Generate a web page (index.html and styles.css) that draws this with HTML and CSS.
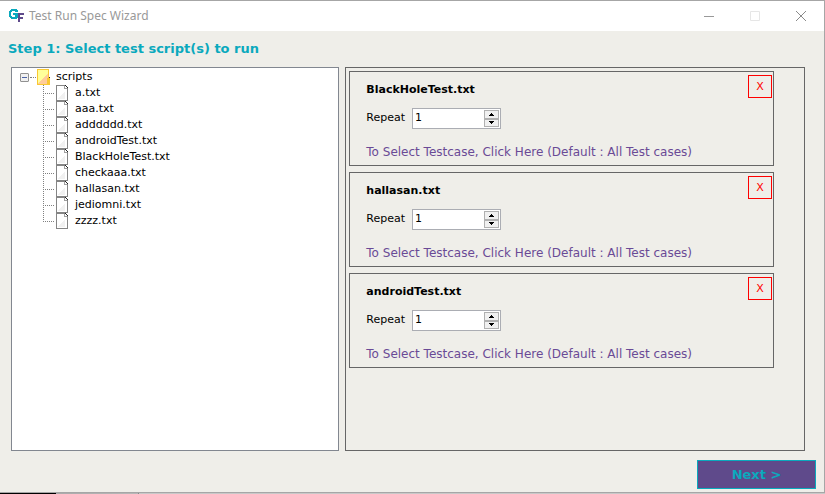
FILE: index.html
```html
<!DOCTYPE html>
<html lang="en">
<head>
<meta charset="utf-8">
<title>Test Run Spec Wizard</title>
<link rel="stylesheet" href="styles.css">
</head>
<body>
<svg class="defs" width="0" height="0" aria-hidden="true">
  <defs>
    <symbol id="file" viewBox="0 0 14 16" shape-rendering="crispEdges">
      <path d="M1 0H10L13 3V16H1Z" fill="#fff"/>
      <path d="M3 14L10 6V14Z" fill="#f1f1f1"/>
      <path d="M1 0H10V1H2V15H12V3H13V16H1Z" fill="#858585"/>
      <path d="M9 1H10V3H12V4H9Z" fill="#a0a0a0"/>
      <path d="M10 0H11V1H12V2H13V3H12V2H11V1H10Z" fill="#222"/>
    </symbol>
    <symbol id="up" viewBox="0 0 5 3" shape-rendering="crispEdges"><path d="M2 0H3V1H4V2H5V3H0V2H1V1H2Z"/></symbol>
    <symbol id="down" viewBox="0 0 5 3" shape-rendering="crispEdges"><path d="M0 0H5V1H4V2H3V3H2V2H1V1H0Z"/></symbol>
  </defs>
</svg>
<div class="window">
  <header class="titlebar">
    <svg class="logo" width="16" height="14" viewBox="0 0 16 14" shape-rendering="crispEdges" aria-hidden="true">
      <path d="M3 0H9V1H10V3H7V2H4V3H3V7H4V8H7V6H5V4H10V9H9V10H3V9H2V8H1V2H2V1H3Z" fill="#0aa9bd"/>
      <path d="M10 4H16V6H12V8H15V10H12V13H10Z" fill="#5f4a8b"/>
    </svg>
    <span class="caption">Test Run Spec Wizard</span>
    <button class="winbtn" aria-label="Minimize"><svg width="10" height="10" viewBox="0 0 10 10"><path d="M0 5.500H10" stroke="#999"/></svg></button>
    <button class="winbtn" aria-label="Maximize" disabled><svg width="10" height="10" viewBox="0 0 10 10"><path d="M.5 .5H9.500V9.500H.5Z" fill="none" stroke="#e6e6e6"/></svg></button>
    <button class="winbtn" aria-label="Close"><svg width="10" height="10" viewBox="0 0 10 10"><path d="M0 0L10 10M10 0L0 10" stroke="#8a8a8a"/></svg></button>
  </header>
  <h1>Step 1: Select test script(s) to run</h1>
  <main class="panes">
    <section class="tree" aria-label="Scripts">
      <div class="root">
        <button class="toggle" aria-label="Collapse scripts"></button>
        <span class="dots"></span>
        <svg width="14" height="16" viewBox="0 0 14 16" shape-rendering="crispEdges" aria-hidden="true">
          <path d="M1 1H12V15H1Z" fill="#ff9"/><path d="M12 3V15H1Z" fill="#ffcc99"/>
          <path d="M0 0H12V8H13V16H0ZM1 1V15H10V9H11V1Z" fill="#f9c832" fill-rule="evenodd"/>
          <path d="M12 8H13V9H12Z" fill="#222"/>
        </svg>
        <span class="name">scripts</span>
      </div>
      <ul>
        <li><svg width="14" height="16"><use href="#file"/></svg><span>a.txt</span></li>
        <li><svg width="14" height="16"><use href="#file"/></svg><span>aaa.txt</span></li>
        <li><svg width="14" height="16"><use href="#file"/></svg><span>adddddd.txt</span></li>
        <li><svg width="14" height="16"><use href="#file"/></svg><span>androidTest.txt</span></li>
        <li><svg width="14" height="16"><use href="#file"/></svg><span>BlackHoleTest.txt</span></li>
        <li><svg width="14" height="16"><use href="#file"/></svg><span>checkaaa.txt</span></li>
        <li><svg width="14" height="16"><use href="#file"/></svg><span>hallasan.txt</span></li>
        <li><svg width="14" height="16"><use href="#file"/></svg><span>jediomni.txt</span></li>
        <li><svg width="14" height="16"><use href="#file"/></svg><span>zzzz.txt</span></li>
      </ul>
    </section>
    <section class="selected" aria-label="Selected scripts">
      <article class="card">
        <div class="info">
          <h2>BlackHoleTest.txt</h2>
          <div class="repeat">
            <label for="r1">Repeat</label>
            <span class="spinner"><input id="r1" type="text" inputmode="numeric" value="1"><span class="steps"><button aria-label="Increase"><svg width="5" height="3"><use href="#up"/></svg></button><button aria-label="Decrease"><svg width="5" height="3"><use href="#down"/></svg></button></span></span>
          </div>
          <a href="#">To Select Testcase, Click Here (Default : All Test cases)</a>
        </div>
        <button class="remove">X</button>
      </article>
      <article class="card">
        <div class="info">
          <h2>hallasan.txt</h2>
          <div class="repeat">
            <label for="r2">Repeat</label>
            <span class="spinner"><input id="r2" type="text" inputmode="numeric" value="1"><span class="steps"><button aria-label="Increase"><svg width="5" height="3"><use href="#up"/></svg></button><button aria-label="Decrease"><svg width="5" height="3"><use href="#down"/></svg></button></span></span>
          </div>
          <a href="#">To Select Testcase, Click Here (Default : All Test cases)</a>
        </div>
        <button class="remove">X</button>
      </article>
      <article class="card">
        <div class="info">
          <h2>androidTest.txt</h2>
          <div class="repeat">
            <label for="r3">Repeat</label>
            <span class="spinner"><input id="r3" type="text" inputmode="numeric" value="1"><span class="steps"><button aria-label="Increase"><svg width="5" height="3"><use href="#up"/></svg></button><button aria-label="Decrease"><svg width="5" height="3"><use href="#down"/></svg></button></span></span>
          </div>
          <a href="#">To Select Testcase, Click Here (Default : All Test cases)</a>
        </div>
        <button class="remove">X</button>
      </article>
    </section>
  </main>
  <footer><button class="next">Next &gt;</button></footer>
</div>
<div class="desktop"></div>
</body>
</html>
```
FILE: styles.css
```css
* { box-sizing: border-box; }
body {
  margin: 0;
  min-height: 100vh;
  display: flex;
  flex-direction: column;
  font: 11px/16px "DejaVu Sans", Verdana, sans-serif;
  color: #000;
  background: #efeee9;
}
button, input { font: inherit; margin: 0; padding: 0; border-radius: 0; }
svg { display: block; flex: none; }
.defs { position: absolute; }

.window {
  flex: 1;
  display: flex;
  flex-direction: column;
  border: 1px solid #a6a6a6;
  border-left: 0;
}
.desktop {
  height: 1px;
  background: linear-gradient(to right, #000 56px, #aaa 56px, #b8b8b8 138px, #888 138px, #888 139px, #c8c8c8 139px);
}

.titlebar {
  display: flex;
  align-items: center;
  height: 30px;
  padding-left: 8px;
  background: #fff;
}
.caption {
  flex: 1;
  margin-left: 5px;
  font: 12px/16px "Noto Sans", sans-serif;
  color: #999;
}
.winbtn {
  width: 46px;
  height: 28px;
  display: grid;
  place-items: center;
  border: 0;
  background: none;
}

h1 {
  margin: 9px 8px;
  font-size: 13px;
  line-height: 18px;
  color: #0aa9bd;
}

.panes {
  flex: 1;
  display: grid;
  grid-template-columns: 5fr 7fr;
  gap: 6px;
  margin: 0 19px 0 11px;
}

.tree {
  padding: 1px 8px;
  background: #fff;
  border: 1px solid #828790;
}
.root { display: flex; align-items: center; height: 16px; }
.toggle {
  width: 9px;
  height: 9px;
  border: 1px solid #919191;
  border-radius: 1px;
  background: linear-gradient(#4b63a7, #4b63a7) center / 5px 1px no-repeat, #f0f0f0;
}
.dots { width: 6px; margin: 0 1px; border-top: 1px dotted #808080; }
.root .name { margin-left: 5px; }
.tree ul { margin: 0; padding: 0 0 0 23px; list-style: none; }
.tree li {
  display: flex;
  align-items: center;
  height: 16px;
  background:
    repeating-linear-gradient(to bottom, #808080 0 1px, transparent 1px 2px) 0 0 / 1px 100% no-repeat,
    repeating-linear-gradient(to right, #808080 0 1px, transparent 1px 2px) 0 8px / 11px 1px no-repeat;
}
.tree li:last-child {
  background-size: 1px 9px, 11px 1px;
}
.tree li svg { margin-left: 12px; }
.tree li span { margin-left: 6px; }

.selected {
  display: flex;
  flex-direction: column;
  gap: 6px;
  padding: 3px 30px 3px 3px;
  border: 1px solid #666;
}
.card {
  display: flex;
  align-items: flex-start;
  min-height: 95px;
  border: 1px solid #666;
  padding: 3px 1px 0 16px;
}
.info { flex: 1; padding-top: 7px; }
h2 { margin: 0; font-size: 11px; line-height: 16px; }
.repeat { display: flex; align-items: center; gap: 7px; margin: 10px 0 15px; height: 21px; }
.repeat label { padding-bottom: 2px; }
.spinner {
  display: flex;
  width: 89px;
  height: 21px;
  padding: 1px;
  border: 1px solid #abadb3;
  background: #fff;
}
.spinner input {
  flex: 1;
  min-width: 0;
  height: 15px;
  padding-left: 1px;
  border: 0;
  background: none;
}
.steps { display: flex; flex-direction: column; width: 15px; height: 17px; }
.steps button {
  flex: 1;
  display: grid;
  place-items: center;
  border: 1px solid #b0b0b0;
  background: #f0f0f0;
}
.card a { display: block; font-size: 12px; color: #6a4a96; text-decoration: none; }
.remove {
  width: 24px;
  height: 23px;
  border: 1px solid #f00;
  background: none;
  color: #f00;
}

footer { display: flex; justify-content: flex-end; padding: 9px 8px 3px; }
.next {
  width: 119px;
  height: 29px;
  border: 1px solid #0aa9bd;
  background: #5f4a8b;
  color: #0aa9bd;
  font-size: 13px;
  font-weight: bold;
}
```
